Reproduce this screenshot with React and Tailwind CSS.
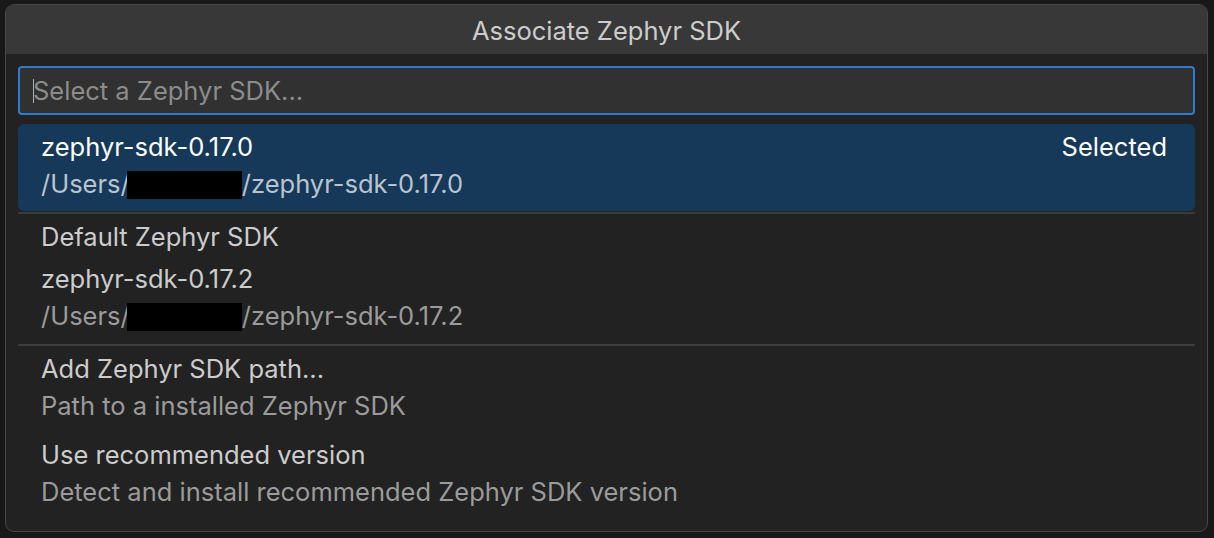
import React from 'react';

const font = { fontFamily: 'Inter, "Noto Sans", sans-serif' };

function Redacted() {
  return <span className="inline-block w-[115px] h-[28px] -ml-[3px] bg-black align-[-6px]" />;
}

function Row({ label, desc, right, selected, redact }) {
  return (
    <div
      className={
        'h-[87px] px-[23px] pt-[4px] rounded-[6px] flex justify-between ' +
        (selected ? 'bg-[#163859]' : '')
      }
    >
      <div className="leading-[37px]">
        <div className={selected ? 'text-white' : 'text-[#cccccc]'}>{label}</div>
        <div className={selected ? 'text-[#b9c4d0]' : 'text-[#9b9b9b]'}>
          {redact ? (
            <>
              /Users/<Redacted />{desc}
            </>
          ) : (
            desc
          )}
        </div>
      </div>
      {right && <div className="leading-[37px] pr-[5px] text-white">{right}</div>}
    </div>
  );
}

export default function App() {
  return (
    <div className="w-[1214px] h-[538px] bg-[#181818] pt-[4px] pl-[5px] text-[25.5px]" style={font}>
      <div className="w-[1203px] h-[528px] rounded-[9px] border border-[#474747] bg-[#222222] overflow-hidden">
        <div className="h-[49px] pt-[3px] bg-[#383838] flex items-center justify-center text-[#cccccc]">
          Associate Zephyr SDK
        </div>
        <div className="px-[12px] pt-[12px]">
          <div className="h-[49px] rounded-[4px] border-2 border-[#2f7bd3] bg-[#313131] flex items-center pl-[13px] pt-[1px]">
            <span className="w-px h-[24px] bg-[#b0b0b0] mr-[-1px]" />
            <span className="text-[#8c8c8c]">Select a Zephyr SDK...</span>
          </div>
          <div className="mt-[9px]">
            <Row label="zephyr-sdk-0.17.0" desc="/zephyr-sdk-0.17.0" right="Selected" selected redact />
          </div>
          <div className="mt-[1px] h-[2px] bg-[#3b3b3b] rounded-full" />
          <div className="h-[130px] px-[23px] pt-[4px] leading-[37px]">
            <div className="text-[#cccccc]">Default Zephyr SDK</div>
            <div className="mt-[5px] text-[#cccccc]">zephyr-sdk-0.17.2</div>
            <div className="text-[#9b9b9b]">
              /Users/<Redacted />/zephyr-sdk-0.17.2
            </div>
          </div>
          <div className="h-[2px] bg-[#3f3f3f] rounded-full" />
          <Row label="Add Zephyr SDK path..." desc="Path to a installed Zephyr SDK" />
          <div className="-mt-[1px]">
            <Row label="Use recommended version" desc="Detect and install recommended Zephyr SDK version" />
          </div>
        </div>
      </div>
    </div>
  );
}
